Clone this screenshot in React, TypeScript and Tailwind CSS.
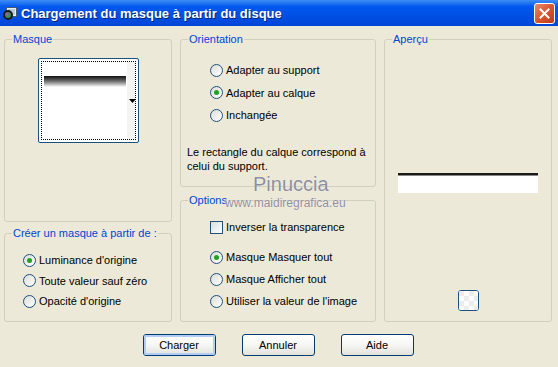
import React from "react";

function Radio({ checked }: { checked?: boolean }) {
  return (
    <span className="shrink-0 w-[13px] h-[13px] rounded-full border border-[#1C5180] bg-gradient-to-br from-[#DCDCD7] to-white flex items-center justify-center">
      {checked && <span className="w-[5px] h-[5px] rounded-full bg-[#21A121]" />}
    </span>
  );
}

function Group({
  label,
  className,
  children,
}: {
  label: string;
  className?: string;
  children?: React.ReactNode;
}) {
  return (
    <div className={`relative border border-[#D0D0BF] rounded-[3px] ${className ?? ""}`}>
      <span className="absolute left-[7px] top-[-8px] px-[1px] bg-[#ECE9D8] text-[#0046D5] leading-[14px] whitespace-nowrap">
        {label}
      </span>
      {children}
    </div>
  );
}

function Btn({ children, def }: { children: React.ReactNode; def?: boolean }) {
  return (
    <div className="w-[73px] h-[22px] rounded-[3px] border border-[#003C74] bg-gradient-to-b from-white via-[#F6F6F3] to-[#E3E2DA] flex items-center justify-center">
      <div
        className={`w-full h-full rounded-[2px] flex items-center justify-center text-black text-[11px] ${
          def ? "border-2 border-[#B4CDF5]" : ""
        }`}
      >
        {children}
      </div>
    </div>
  );
}

export default function App() {
  return (
    <div className="relative w-[558px] h-[367px] bg-[#ECE9D8] overflow-hidden font-['Liberation_Sans',Arial,sans-serif] text-[11px] text-black">
      {/* Title bar */}
      <div className="h-[26px] flex items-center bg-gradient-to-b from-[#3D8DF5] via-[#0058EE] via-25% to-[#0046D8] pl-[2px] pr-[3px]">
        <svg width="15" height="15" viewBox="0 0 15 15" className="shrink-0">
          <rect x="4.5" y="1.5" width="10" height="9" fill="#E4ECF4" stroke="#4A5A70" />
          <rect x="6" y="3" width="7" height="6" fill="#B8CCE0" />
          <circle cx="6" cy="9" r="5" fill="#1A1A1A" />
          <circle cx="6" cy="9" r="3" fill="#3B8C5A" />
          <circle cx="5" cy="8" r="1.5" fill="#B050C0" />
        </svg>
        <span className="ml-[4px] text-white font-bold text-[13px] leading-none [text-shadow:1px_1px_0_#0A246A]">
          Chargement du masque à partir du disque
        </span>
        <div className="ml-auto w-[21px] h-[21px] rounded-[3px] border border-white bg-gradient-to-br from-[#E8886A] via-[#D9562F] to-[#B8391C] flex items-center justify-center">
          <svg width="11" height="11" viewBox="0 0 11 11">
            <path d="M1.5 1.5 L9.5 9.5 M9.5 1.5 L1.5 9.5" stroke="white" strokeWidth="2" strokeLinecap="square" />
          </svg>
        </div>
      </div>

      {/* Groups */}
      <div className="flex px-[4px] pt-[13px] gap-[8px]">
        {/* Left column */}
        <div className="w-[168px] flex flex-col gap-[11px]">
          <Group label="Masque" className="h-[183px]">
            <div className="flex justify-center pt-[18px]">
              <div className="w-[101px] h-[85px] border border-[#1C5180] rounded-[2px] bg-white p-[2px]">
                <div className="relative h-full border border-dotted border-black pl-[2px] pt-[14px]">
                  <div className="absolute right-0 top-0 bottom-0 w-[8px] bg-[#F4F4F2]" />
                  <div className="relative w-[82px] h-[11px] bg-gradient-to-b from-[#111] via-[#777] to-white" />
                  <svg width="7" height="4" viewBox="0 0 7 4" className="absolute right-[-1px] top-[37px]">
                    <path d="M0 0 H7 L3.5 4 Z" fill="#000" />
                  </svg>
                </div>
              </div>
            </div>
          </Group>
          <Group label="Créer un masque à partir de :" className="h-[89px]">
            <div className="pt-[16px] pl-[18px] flex flex-col">
              <div className="h-[20.5px] flex items-center gap-[3px]">
                <Radio checked />
                <span>Luminance d'origine</span>
              </div>
              <div className="h-[20.5px] flex items-center gap-[3px]">
                <Radio />
                <span>Toute valeur sauf zéro</span>
              </div>
              <div className="h-[20.5px] flex items-center gap-[3px]">
                <Radio />
                <span>Opacité d'origine</span>
              </div>
            </div>
          </Group>
        </div>

        {/* Middle column */}
        <div className="w-[196px] flex flex-col gap-[13px]">
          <Group label="Orientation" className="h-[148px]">
            <div className="pt-[19px] pl-[29px] flex flex-col">
              <div className="h-[22.5px] flex items-center gap-[3px]">
                <Radio />
                <span>Adapter au support</span>
              </div>
              <div className="h-[22.5px] flex items-center gap-[3px]">
                <Radio checked />
                <span>Adapter au calque</span>
              </div>
              <div className="h-[22.5px] flex items-center gap-[3px]">
                <Radio />
                <span>Inchangée</span>
              </div>
            </div>
            <p className="mt-[18.5px] pl-[6px] leading-[14px]">
              Le rectangle du calque correspond à
              <br />
              celui du support.
            </p>
          </Group>
          <Group label="Options" className="h-[122px]">
            <div className="pt-[16px] pl-[29px] flex flex-col">
              <div className="h-[20px] flex items-center gap-[3px]">
                <span className="shrink-0 w-[13px] h-[13px] border border-[#1C5180] bg-gradient-to-br from-[#DCDCD7] to-white" />
                <span>Inverser la transparence</span>
              </div>
              <div className="mt-[9px] h-[22px] flex items-center gap-[3px]">
                <Radio checked />
                <span>Masque Masquer tout</span>
              </div>
              <div className="h-[22px] flex items-center gap-[3px]">
                <Radio />
                <span>Masque Afficher tout</span>
              </div>
              <div className="h-[22px] flex items-center gap-[3px]">
                <Radio />
                <span>Utiliser la valeur de l'image</span>
              </div>
            </div>
          </Group>
        </div>

        {/* Right column */}
        <Group label="Aperçu" className="w-[168px] h-[283px]">
          <div className="pt-[133px] px-[13px]">
            <div className="h-[20px] bg-white flex flex-col">
              <div className="h-[2px] bg-[#1A1A1A]" />
              <div className="h-[1px] bg-[#8A8A8A]" />
            </div>
          </div>
          <div className="mt-[97px] flex justify-center">
            <div className="w-[21px] h-[21px] rounded-[3px] border border-[#1C5180] bg-white overflow-hidden">
              <svg width="19" height="19" viewBox="0 0 19 19">
                <rect width="19" height="19" fill="#FBFBFB" />
                <rect x="0" y="0" width="5" height="5" fill="#ECECEC" />
                <rect x="10" y="0" width="5" height="5" fill="#ECECEC" />
                <rect x="5" y="5" width="5" height="5" fill="#ECECEC" />
                <rect x="15" y="5" width="5" height="5" fill="#ECECEC" />
                <rect x="0" y="10" width="5" height="5" fill="#ECECEC" />
                <rect x="10" y="10" width="5" height="5" fill="#ECECEC" />
                <rect x="5" y="15" width="5" height="5" fill="#ECECEC" />
                <rect x="15" y="15" width="5" height="5" fill="#ECECEC" />
              </svg>
            </div>
          </div>
        </Group>
      </div>

      {/* Buttons */}
      <div className="mt-[12px] flex justify-center gap-[26px] pr-[2px]">
        <Btn def>Charger</Btn>
        <Btn>Annuler</Btn>
        <Btn>Aide</Btn>
      </div>

      {/* Watermark */}
      <div className="absolute left-[253px] top-[174px] text-[20px] leading-[20px] text-[#8E8EA0] [text-shadow:0_0_1px_#fff]">
        Pinuccia
      </div>
      <div className="absolute left-[225px] top-[197px] text-[12px] leading-[12px] text-[#8E8E9E] [text-shadow:0_0_1px_#fff]">
        www.maidiregrafica.eu
      </div>
    </div>
  );
}
